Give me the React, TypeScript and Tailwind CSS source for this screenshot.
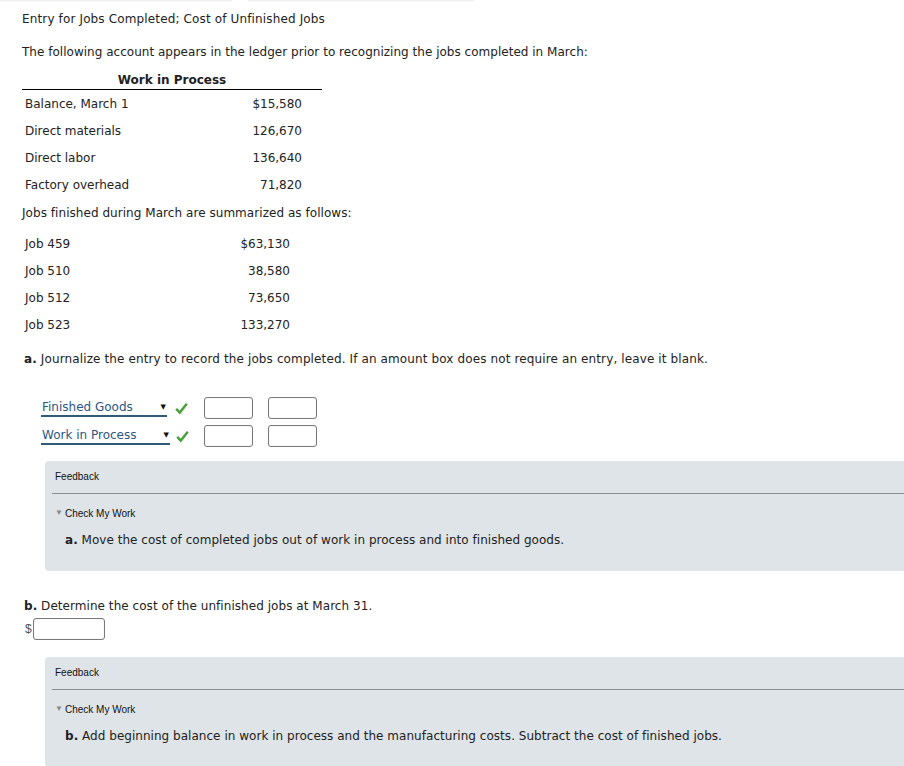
const ledger = [
  { label: 'Balance, March 1', amount: '$15,580' },
  { label: 'Direct materials', amount: '126,670' },
  { label: 'Direct labor', amount: '136,640' },
  { label: 'Factory overhead', amount: '71,820' },
]

const jobs = [
  { label: 'Job 459', amount: '$63,130' },
  { label: 'Job 510', amount: '38,580' },
  { label: 'Job 512', amount: '73,650' },
  { label: 'Job 523', amount: '133,270' },
]

const entries = ['Finished Goods', 'Work in Process']

function Check() {
  return (
    <svg width="13" height="13" viewBox="0 0 13 13" className="shrink-0">
      <path d="M1.2 6.8 L4.8 10.6 L11.8 1.8" fill="none" stroke="#48a03a" strokeWidth="2.5" />
    </svg>
  )
}

function AmountBox({ w = 'w-[49px]' }: { w?: string }) {
  return <div className={`h-[22px] ${w} rounded-[3px] border border-[#7a7a7a] bg-white shadow-[inset_0_0_1px_rgba(0,0,0,0.25)]`} />
}

function Feedback({ letter, text }: { letter: string; text: string }) {
  return (
    <div className="ml-[45px] h-[110px] rounded-l-[4px] bg-[#dee4e7] pt-[8px]">
      <p className="ml-[10px] h-[16px] font-['Liberation_Sans',Arial,sans-serif] text-[10px] leading-[16px] text-[#111]">
        Feedback
      </p>
      <div className="ml-[7px] mt-[8px] border-t border-[#8b9094]" />
      <p className="ml-[10px] mt-[11px] flex h-[16px] items-center font-['Liberation_Sans',Arial,sans-serif] text-[10px] text-[#111]">
        <span className="mr-[2px] text-[8px] text-[#8a8a8a]">▼</span>
        Check My Work
      </p>
      <p className="ml-[20px] mt-[11px] h-[16px] leading-[16px] tracking-[0.03px]">
        <span className="font-bold">{letter}.</span> {text}
      </p>
    </div>
  )
}

export default function App() {
  return (
    <div className="relative h-[766px] w-[904px] overflow-hidden bg-white font-['DejaVu_Sans',Verdana,sans-serif] text-[12px] text-[#222]">
      <div className="absolute left-0 top-0 h-[2px] w-[232px] bg-gradient-to-b from-[#ececec] to-white" />
      <div className="absolute left-[248px] top-0 h-[2px] w-[226px] bg-gradient-to-b from-[#ececec] to-white" />

      <p className="ml-[22px] mt-[11px] h-[16px] leading-[16px] tracking-[0.14px]">
        Entry for Jobs Completed; Cost of Unfinished Jobs
      </p>
      <p className="ml-[22px] mt-[17px] h-[16px] leading-[16px] tracking-[0.02px]">
        The following account appears in the ledger prior to recognizing the jobs completed in March:
      </p>

      <div className="ml-[22px] mt-[10px] w-[300px]">
        <div className="flex h-[20px] items-center justify-center border-b border-black font-bold">
          Work in Process
        </div>
        {ledger.map((row) => (
          <div key={row.label} className="flex h-[27px] items-center justify-between pl-[3px] pr-[20px] pt-[1px]">
            <span>{row.label}</span>
            <span>{row.amount}</span>
          </div>
        ))}
      </div>

      <p className="ml-[22px] mt-[7px] h-[16px] leading-[16px] tracking-[0.05px]">
        Jobs finished during March are summarized as follows:
      </p>

      <div className="ml-[22px] mt-[9px] w-[268px]">
        {jobs.map((row) => (
          <div key={row.label} className="flex h-[27px] items-center justify-between pl-[3px]">
            <span>{row.label}</span>
            <span>{row.amount}</span>
          </div>
        ))}
      </div>

      <p className="ml-[24px] mt-[13px] h-[16px] leading-[16px] tracking-[0.12px]">
        <span className="font-bold">a.</span> Journalize the entry to record the jobs completed. If an amount box does not
        require an entry, leave it blank.
      </p>

      <div className="ml-[41px] mt-[27px]">
        {entries.map((name, i) => (
          <div key={name} className="flex h-[28px] items-center">
            <div
              className={`flex h-[17px] ${i === 0 ? 'w-[126px]' : 'w-[129px]'} items-center justify-between border-b-2 border-[#2f5b78] pl-[1px] pr-[1px] text-[#2a5585]`}
            >
              <span className="leading-[14px]">{name}</span>
              <span className="text-[7px] text-[#111]">▼</span>
            </div>
            <div className={i === 0 ? 'ml-[8px]' : 'ml-[6px]'}>
              <Check />
            </div>
            <div className={`${i === 0 ? 'ml-[16px]' : 'ml-[15px]'} flex gap-[15px]`}>
              <AmountBox />
              <AmountBox />
            </div>
          </div>
        ))}
      </div>

      <div className="mt-[11px]">
        <Feedback letter="a" text="Move the cost of completed jobs out of work in process and into finished goods." />
      </div>

      <p className="ml-[24px] mt-[27px] h-[16px] leading-[16px] tracking-[0.05px]">
        <span className="font-bold">b.</span> Determine the cost of the unfinished jobs at March 31.
      </p>
      <div className="ml-[25px] mt-[3px] flex h-[23px] items-center">
        <span className="font-['Liberation_Sans',Arial,sans-serif] text-[12px] text-[#555]">$</span>
        <div className="ml-[1px]">
          <AmountBox w="w-[72px]" />
        </div>
      </div>

      <div className="mt-[17px]">
        <Feedback
          letter="b"
          text="Add beginning balance in work in process and the manufacturing costs. Subtract the cost of finished jobs."
        />
      </div>
    </div>
  )
}
